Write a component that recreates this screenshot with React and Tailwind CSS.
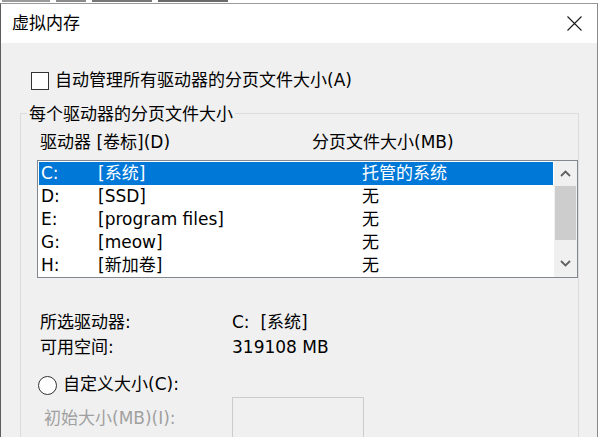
import { useState } from "react";

const drives = [
  { letter: "C:", label: "[系统]", size: "托管的系统" },
  { letter: "D:", label: "[SSD]", size: "无" },
  { letter: "E:", label: "[program files]", size: "无" },
  { letter: "G:", label: "[meow]", size: "无" },
  { letter: "H:", label: "[新加卷]", size: "无" },
];

function Chevron({ up }) {
  return (
    <svg width="11" height="7" viewBox="0 0 11 7" fill="none">
      <path
        d={up ? "M1 6 L5.5 1.5 L10 6" : "M1 1 L5.5 5.5 L10 1"}
        stroke="#606060"
        strokeWidth="1.8"
      />
    </svg>
  );
}

export default function App() {
  const [selected, setSelected] = useState(0);
  const [auto, setAuto] = useState(false);

  return (
    <div
      className="w-[600px] h-[437px] overflow-hidden bg-white text-[17px] text-black"
      style={{ fontFamily: '"DejaVu Sans", "Noto Sans CJK SC", sans-serif' }}
    >
      {/* bit of the window behind */}
      <div className="h-[3px] flex items-start gap-[6px] pl-[2px]">
        <div className="h-[2px] w-[48px] bg-[#9a9a9a]" />
        <div className="h-[2px] w-[30px] bg-[#8a8a8a]" />
        <div className="h-[2px] w-[60px] bg-[#777]" />
        <div className="h-[2px] w-[70px] bg-[#6a6a6a]" />
      </div>

      <div className="w-[598px] h-[434px] flex flex-col border-l border-r border-t border-l-[#5c5c5c] border-r-[#8a8a8a] border-t-[#9a9a9a]">
        {/* title bar */}
        <div className="h-[39px] bg-white flex items-center justify-between pl-[11px] pr-[15px] shrink-0">
          <span className="leading-none">虚拟内存</span>
          <svg width="15" height="15" viewBox="0 0 15 15">
            <path d="M0.5 0.5 L14.5 14.5 M14.5 0.5 L0.5 14.5" stroke="#1a1a1a" strokeWidth="1.1" />
          </svg>
        </div>

        {/* body */}
        <div className="flex-1 bg-[#f0f0f0] pl-[19px]">
          <div className="mt-[26px] h-[24px] flex items-center pl-[11px] gap-[6px]">
            <button
              type="button"
              onClick={() => setAuto(!auto)}
              className="w-[18px] h-[18px] border border-[#333] bg-white"
            />
            <span>自动管理所有驱动器的分页文件大小(A)</span>
          </div>

          <div className="relative mt-[20px] w-[559px] h-[400px] border border-[#dcdcdc]">
            <span className="absolute left-[6px] -top-[12px] h-[24px] leading-[24px] px-[2px] bg-[#f0f0f0]">
              每个驱动器的分页文件大小
            </span>

            <div className="mt-[18px] h-[22px] flex items-center pl-[19px]">
              <span className="w-[272px]">驱动器 [卷标](D)</span>
              <span>分页文件大小(MB)</span>
            </div>

            <div className="mt-[6px] ml-[16px] w-[541px] h-[118px] border border-[#828790] bg-white flex">
              <div className="flex-1 p-[1px]">
                {drives.map((d, i) => (
                  <div
                    key={d.letter}
                    onClick={() => setSelected(i)}
                    className={`h-[23px] flex items-center pl-[2px] ${
                      selected === i ? "bg-[#0078d7] text-white" : ""
                    }`}
                  >
                    <span className="w-[57px]">{d.letter}</span>
                    <span className="w-[264px]">{d.label}</span>
                    <span>{d.size}</span>
                  </div>
                ))}
              </div>
              <div className="w-[23px] bg-[#f0f0f0] flex flex-col">
                <div className="h-[25px] flex items-center justify-center">
                  <Chevron up />
                </div>
                <div className="h-[54px] mx-[1px] bg-[#cdcdcd]" />
                <div className="flex-1 flex items-center justify-center pt-[10px]">
                  <Chevron />
                </div>
              </div>
            </div>

            <div className="mt-[32px] pl-[19px]">
              <div className="h-[25px] flex items-center">
                <span className="w-[192px]">所选驱动器:</span>
                <span>C:&nbsp; [系统]</span>
              </div>
              <div className="h-[25px] flex items-center">
                <span className="w-[192px]">可用空间:</span>
                <span>319108 MB</span>
              </div>
            </div>

            <div className="mt-[13px] h-[24px] flex items-center pl-[17px] gap-[6px]">
              <span className="w-[19px] h-[19px] rounded-full border border-[#333] bg-white" />
              <span>自定义大小(C):</span>
            </div>

            <div className="flex items-start pl-[23px]">
              <span className="w-[188px] mt-[10px] h-[22px] leading-[22px] text-[#a0a0a0]">初始大小(MB)(I):</span>
              <div className="w-[132px] h-[44px] border border-[#cccccc] bg-[#f0f0f0]" />
            </div>
          </div>
        </div>
      </div>
    </div>
  );
}
